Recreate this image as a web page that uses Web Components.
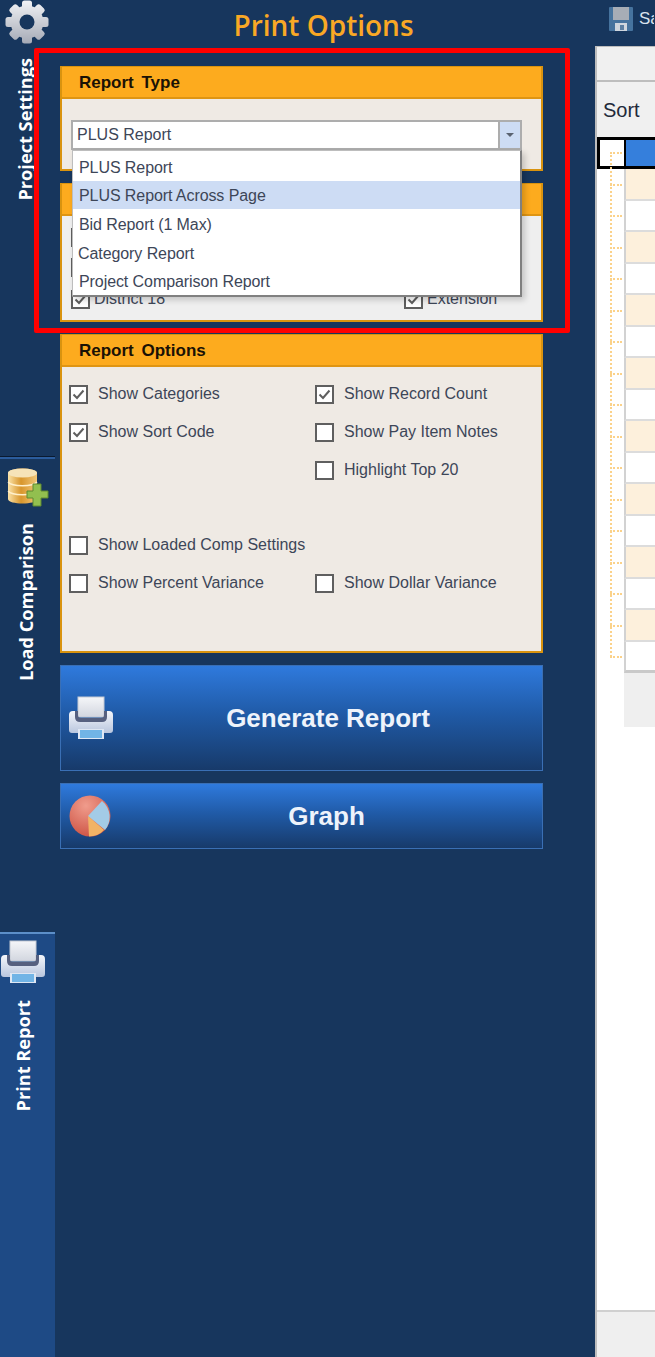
<!DOCTYPE html>
<html><head><meta charset="utf-8">
<style>
html,body{margin:0;padding:0;background:#17365d;height:1357px;overflow:hidden}
body{font-family:"Liberation Sans",Arial,sans-serif}
#app{display:flex;height:1357px;position:relative;overflow:hidden;width:655px}
</style></head><body>
<script>
function def(name,html){customElements.define(name,class extends HTMLElement{constructor(){super();this.attachShadow({mode:'open'}).innerHTML=html;}});}
def('printer-icon',`<style>:host{display:block;line-height:0}</style>
<svg viewBox="0 0 46 44" width="46" height="44"><defs>
<linearGradient id="pb" x1="0" y1="0" x2="0" y2="1"><stop offset="0" stop-color="#f4f6fb"/><stop offset="1" stop-color="#b9c6de"/></linearGradient>
<linearGradient id="pp" x1="0" y1="0" x2="0" y2="1"><stop offset="0" stop-color="#f5f6f9"/><stop offset="1" stop-color="#d2d6df"/></linearGradient>
</defs>
<rect x="10" y="1" width="26" height="20" fill="url(#pp)" stroke="#c4c9d4" stroke-width="1"/>
<path d="M5 15h4v4q0 5 5 5h18q5 0 5-5v-4h4q4 0 4 4v15q0 3-3 3H4q-3 0-3-3V19q0-4 4-4z" fill="url(#pb)"/>
<path d="M7 15h3v4q0 3 3 3h20q3 0 3-3v-4h3v6q0 5-5 5H12q-5 0-5-5z" fill="#56607f"/>
<rect x="10" y="33" width="26" height="10" fill="#dfe7f3"/><rect x="12" y="34" width="22" height="8" fill="#71b4e6"/>
</svg>`);
const teeth=Array.from({length:8},(_,i)=>`<rect x="17" y="0.5" width="10" height="12" rx="2.5" fill="#fff" transform="rotate(${i*45} 22 22)"/>`).join('');
def('gear-icon',`<style>:host{display:block;line-height:0}</style><svg viewBox="0 0 44 44" width="44" height="44"><defs><linearGradient id="g" x1="0" y1="0" x2="0" y2="1"><stop offset="0" stop-color="#f2f3f6"/><stop offset="1" stop-color="#a4a9b5"/></linearGradient><mask id="m">${teeth}<circle cx="22" cy="22" r="16.5" fill="#fff"/><circle cx="22" cy="22" r="7.5" fill="#000"/></mask></defs><rect width="44" height="44" fill="url(#g)" mask="url(#m)"/></svg>`);
def('db-icon',`<style>:host{display:block;line-height:0}</style><svg viewBox="0 0 42 40" width="42" height="40"><defs><linearGradient id="d" x1="0" y1="0" x2="1" y2="0"><stop offset="0" stop-color="#fbe3a8"/><stop offset=".45" stop-color="#d8962c"/><stop offset="1" stop-color="#f2c77a"/></linearGradient></defs><path d="M1 6c0-6 29-6 29 0v26c0 6-29 6-29 0z" fill="url(#d)"/><ellipse cx="15.5" cy="6" rx="14.5" ry="4.5" fill="#f6e3b8"/><path d="M1 15c4 5 25 5 29 0M1 24c4 5 25 5 29 0" fill="none" stroke="#fff0cc" stroke-width="1.4"/><path d="M20 24h6v-7h8v7h7v7h-7v8h-8v-8h-6z" fill="#92bf4f" stroke="#5f8a30" stroke-width="1"/></svg>`);
def('pie-icon',`<style>:host{display:block;line-height:0}</style><svg viewBox="0 0 42 42" width="42" height="42"><defs><radialGradient id="p" cx=".4" cy=".25" r=".9"><stop offset="0" stop-color="#f09c8c"/><stop offset="1" stop-color="#c8493a"/></radialGradient></defs><circle cx="21" cy="21" r="20.5" fill="url(#p)"/><path d="M19 21L33 6A20.5 20.5 0 0 1 36 35z" fill="#a3cbe6"/><path d="M19 21L35 35A20.5 20.5 0 0 1 20 41.5z" fill="#f2b365"/></svg>`);
def('save-icon',`<style>:host{display:block;line-height:0}</style><svg viewBox="0 0 24 24" width="24" height="24"><rect width="24" height="24" rx="1" fill="#46739e"/><rect x="4" y="0" width="16" height="13" fill="#a7adb6"/><rect x="6" y="16" width="12" height="8" fill="#cfd6de"/><rect x="11" y="18" width="4" height="5" fill="#5c7fa2"/></svg>`);

def('rail-tab',`<style>:host{display:flex;flex-direction:column;align-items:center;box-sizing:border-box;width:55px;color:#fff;overflow:hidden;flex:none}
:host([active]){background:#1e4a85;border-top:2px solid #5c8fc9;flex:1}
:host([line]){border-top:2px solid #2b5c9c;box-shadow:0 -1px 0 #0a1a30}
.t{writing-mode:vertical-rl;transform:translateX(var(--shift,-2px)) rotate(180deg);font:bold 18.2px/20px "Open Sans","Liberation Sans",sans-serif;white-space:nowrap;margin-top:var(--gap,16px)}
.ic{display:flex;justify-content:center;width:100%}
</style><div class="ic"><slot name="icon"></slot></div><div class="t"><slot></slot></div>`);

def('side-rail',`<style>:host{display:flex;flex-direction:column;width:55px;flex:none}</style><slot></slot>`);

def('check-box',`<style>:host{display:flex;align-items:center;gap:10px;height:20px;font:16px/20px "Liberation Sans",Arial,sans-serif;color:#3d4658;white-space:nowrap}
.b{width:19px;height:19px;box-sizing:border-box;border:2px solid #5f5f5f;background:#fff;flex:none;line-height:0;}
svg{display:block}
:host(:not([checked])) svg{display:none}
</style><span class="b"><svg viewBox="0 0 15 15" width="15" height="15"><path d="M2.5 7.5l3.5 3.5L12.5 3.5" fill="none" stroke="#5f5f5f" stroke-width="2"/></svg></span><span><slot></slot></span>`);

def('group-panel',`<style>:host{display:flex;flex-direction:column;box-sizing:border-box;background:#efeae4;border:2px solid #d9930f;border-top:1px solid #d9930f}
.h{height:32px;box-sizing:border-box;background:#fdab1e;border-bottom:2px solid #df9513;padding-left:17px;font:bold 17px/31px "Liberation Sans",Arial,sans-serif;color:#1a1205;word-spacing:3px;flex:none}
.c{flex:1;position:relative;min-height:0}
</style><div class="h"><slot name="title"></slot></div><div class="c"><slot></slot></div>`);

def('big-button',`<style>:host{display:flex;align-items:center;box-sizing:border-box;border:1px solid #3a6fb4;background:linear-gradient(#2f7add 0%,#205ba8 45%,#173a6a 100%);color:#eef3fb;font:bold 26px "Liberation Sans",Arial,sans-serif;position:relative}
.i{flex:none;display:flex;margin-left:7px}
.t{flex:1;text-align:center}
</style><span class="i"><slot name="icon"></slot></span><span class="t"><slot></slot></span>`);

def('combo-list',`<style>:host{display:flex;flex-direction:column;box-sizing:border-box;background:#fff;border:1px solid #bdbdbd;border-right:2px solid #808080;border-bottom:2px solid #808080;font:16px "Liberation Sans",Arial,sans-serif;color:#3d4658;box-shadow:3px 3px 6px rgba(0,0,0,.18);padding:1px 0 0 0}
</style><slot></slot>`);
def('combo-item',`<style>:host{display:flex;align-items:center;height:28.6px;padding:3px 0 0 6px;white-space:nowrap;box-sizing:border-box;letter-spacing:-.08px}
:host([sel]){background:#cddcf4}</style><slot></slot>`);

def('grid-rows',`<style>:host{display:flex;flex-direction:column;position:relative}
.r{height:31.5px;box-sizing:border-box;border-bottom:2px solid #dcdcdc;margin-left:27px;background:#fff;border-left:2px solid #d2d2d2}
.r:nth-child(odd){background:#fdf0dc}
.tree{position:absolute;left:13px;top:-17px;height:504.5px;width:0;border-left:2px dotted #fbd28a}
.d{position:absolute;left:13px;width:12px;border-top:2px dotted #fbd28a}
.r:last-of-type{border-bottom:3px solid #c9c9c9}
.blank{margin-left:27px;height:54px;background:#efefef}
</style><div class="tree"></div><div class="d" style="top:-17px"></div>
${Array.from({length:16},(_,i)=>`<div class="d" style="top:${14.5+i*31.5}px"></div>`).join('')}
<div>${Array.from({length:16},()=>`<div class="r"></div>`).join('')}</div><div class="blank"></div>`);
</script>

<div id="app">
<side-rail>
  <rail-tab style="height:457px;--gap:14px;--shift:-3px"><gear-icon slot="icon" style="transform:translateX(-1px)"></gear-icon>Project Settings</rail-tab>
  <rail-tab line style="height:475px"><db-icon slot="icon" style="margin-top:8px"></db-icon>Load Comparison</rail-tab>
  <rail-tab active style="--shift:-5px"><printer-icon slot="icon" style="margin-top:6px;transform:translateX(-5px)"></printer-icon>Print Report</rail-tab>
</side-rail>

<main style="width:483px;flex:none;margin-left:5px;display:flex;flex-direction:column">
  <div style="height:50px;margin-bottom:16px;text-align:center;font:600 28px/50px 'Open Sans','Liberation Sans',sans-serif;color:#f9a825;"><span style="display:inline-block;transform:translateX(22px)">Print Options</span></div>

  <group-panel style="height:105px"><span slot="title">Report Type</span>
    <div style="display:flex;margin:21px 19px 0 9px;height:30px;box-sizing:border-box;border:2px solid #adadad;background:#fff;font:16px/26px 'Liberation Sans',Arial,sans-serif;color:#3d4658;padding-left:4px;">
      <span style="flex:1">PLUS Report</span>
      <span style="width:20px;background:#cddcf4;border-left:2px solid #adadad;display:flex;align-items:center;justify-content:center"><svg width="10" height="6" viewBox="0 0 10 6"><path d="M1 1h8L5 5z" fill="#5a6270"/></svg></span>
    </div>
  </group-panel>

  <group-panel style="height:139px;margin-top:12px;background:#efefef">
    <div style="display:flex;flex-direction:column;gap:10px;margin:11px 0 0 9px;width:19px">
      <check-box></check-box><check-box></check-box>
    </div>
    <div style="display:grid;grid-template-columns:333px 1fr;margin:12px 0 0 9px">
      <check-box checked style="gap:4px">District 18</check-box><check-box checked style="gap:4px">Extension</check-box>
    </div>
  </group-panel>

  <group-panel style="height:319px;margin-top:12px"><span slot="title">Report Options</span>
    <div style="display:grid;grid-template-columns:246px 1fr;grid-template-rows:repeat(3,38px);padding:17px 0 0 7px">
      <check-box checked>Show Categories</check-box><check-box checked>Show Record Count</check-box>
      <check-box checked>Show Sort Code</check-box><check-box>Show Pay Item Notes</check-box>
      <span></span><check-box>Highlight Top 20</check-box>
    </div>
    <div style="display:grid;grid-template-columns:246px 1fr;grid-template-rows:repeat(2,38px);padding:37px 0 0 7px">
      <check-box style="grid-column:1/3">Show Loaded Comp Settings</check-box>
      <check-box>Show Percent Variance</check-box><check-box>Show Dollar Variance</check-box>
    </div>
  </group-panel>

  <big-button style="height:106px;margin-top:12px"><printer-icon slot="icon"></printer-icon>Generate Report</big-button>
  <big-button style="height:66px;margin-top:12px"><pie-icon slot="icon" style="margin-left:1px"></pie-icon>Graph</big-button>
</main>

<aside style="margin-left:53px;width:59px;flex:none;display:flex;flex-direction:column;position:relative;left:-1px">
  <div style="height:46px;display:flex;align-items:flex-start;gap:6px;padding:7px 0 0 14px;box-sizing:border-box;color:#d9e2ee;font:17px/24px 'Liberation Sans',Arial,sans-serif;white-space:nowrap;overflow:hidden"><save-icon style="flex:none"></save-icon><span>Save</span></div>
  <div style="flex:1;background:#fff;border-left:2px solid #bdbdbd;display:flex;flex-direction:column;box-sizing:border-box;margin-right:-1px">
    <div style="height:36px;background:#f0f0f0;border-bottom:2px solid #bdbdbd;border-top:1px solid #bdbdbd;box-sizing:border-box;flex:none"></div>
    <div style="height:55px;background:#f0f0f0;padding-left:6px;font:20px/56px 'Liberation Sans',Arial,sans-serif;color:#222a3a;box-sizing:border-box;flex:none">Sort</div>
    <div style="height:32px;background:#000;padding:3px 0 3px 3px;display:flex;gap:2px;box-sizing:border-box;flex:none">
      <div style="width:24px;background:#fff"></div><div style="flex:1;background:#357fdc"></div>
    </div>
    <grid-rows style="flex:none"></grid-rows>
    <div style="flex:1"></div>
    <div style="height:47px;background:#efefef;flex:none;border-top:2px solid #d0d0d0;box-sizing:border-box"></div>
  </div>
</aside>

<combo-list style="position:absolute;left:72px;top:150px;width:450px;height:147px">
  <combo-item>PLUS Report</combo-item>
  <combo-item sel>PLUS Report Across Page</combo-item>
  <combo-item>Bid Report (1 Max)</combo-item>
  <combo-item style="padding-left:5px">Category Report</combo-item>
  <combo-item>Project Comparison Report</combo-item>
</combo-list>
<div style="position:absolute;left:34px;top:48px;width:536px;height:285px;box-sizing:border-box;border:5px solid #f00;border-radius:2px"></div>
</div>
</body></html>
